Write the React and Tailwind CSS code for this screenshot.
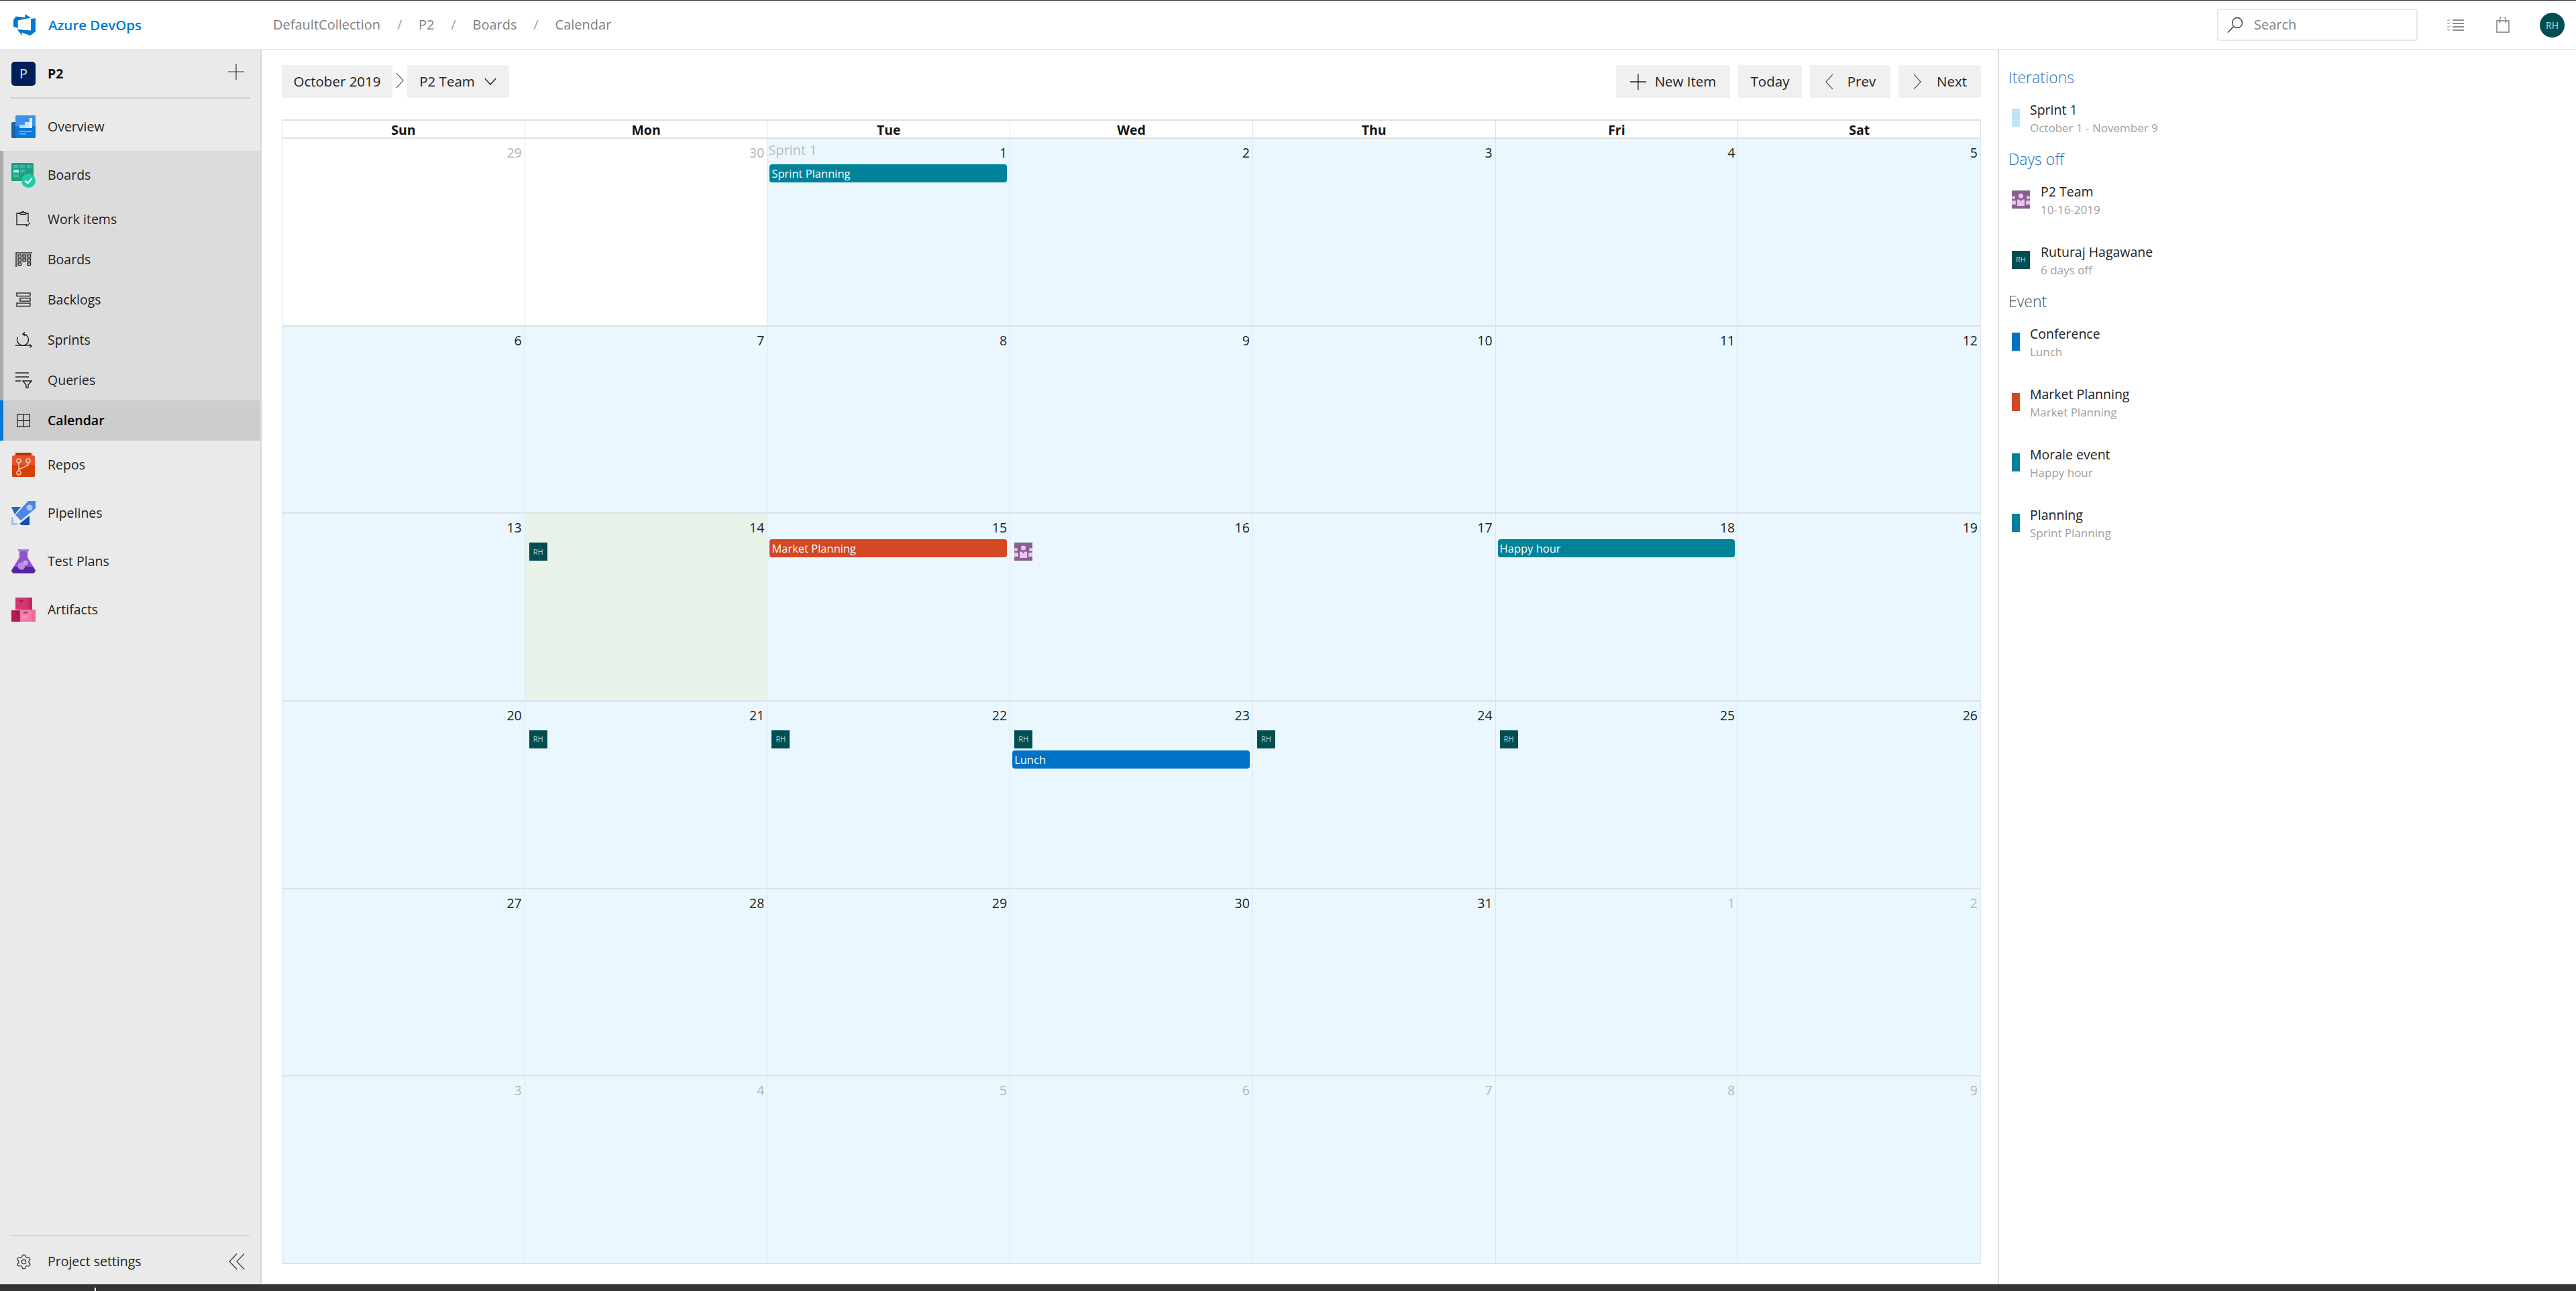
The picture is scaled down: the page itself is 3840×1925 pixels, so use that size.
import { Settings } from "lucide-react";

const WEEKS = [
  [29, 30, 1, 2, 3, 4, 5],
  [6, 7, 8, 9, 10, 11, 12],
  [13, 14, 15, 16, 17, 18, 19],
  [20, 21, 22, 23, 24, 25, 26],
  [27, 28, 29, 30, 31, 1, 2],
  [3, 4, 5, 6, 7, 8, 9],
];

const DAY_NAMES = ["Sun", "Mon", "Tue", "Wed", "Thu", "Fri", "Sat"];

// items per "week-day" cell
const CELL_ITEMS = {
  "0-2": [{ type: "bar", label: "Sprint Planning", color: "bg-[#008299]" }],
  "2-1": [{ type: "rh" }],
  "2-2": [{ type: "bar", label: "Market Planning", color: "bg-[#d34723]" }],
  "2-3": [{ type: "team" }],
  "2-5": [{ type: "bar", label: "Happy hour", color: "bg-[#008299]" }],
  "3-1": [{ type: "rh" }],
  "3-2": [{ type: "rh" }],
  "3-3": [{ type: "rh" }, { type: "bar", label: "Lunch", color: "bg-[#0072c6]", top: true }],
  "3-4": [{ type: "rh" }],
  "3-5": [{ type: "rh" }],
};

const TeamTile = ({ className }) => (
  <svg viewBox="0 0 27 27" className={className}>
    <rect width="27" height="27" fill="#86608e" />
    <g fill="#e8c4ee">
      <circle cx="13.5" cy="8" r="3.6" />
      <path d="M8 13.5h3.4l2.1 3 2.1-3H19V23H8z" />
      <circle cx="2.5" cy="10.5" r="2.5" />
      <path d="M0 15h4.5l1.5 1V21H0z" />
      <circle cx="24.5" cy="10.5" r="2.5" />
      <path d="M27 15h-4.5l-1.5 1V21h6z" />
    </g>
  </svg>
);

const RhTile = () => (
  <div className="w-[27px] h-[27px] bg-[#004e52] text-[#b9d6d6] text-[11px] flex items-center justify-center">
    RH
  </div>
);

const AzureLogo = () => (
  <svg viewBox="0 0 34 32" className="w-[34px] h-[32px]">
    <path fill="#0078d4" d="M34 6.200V26l-8 6-12.400-4.500V32l-7-9.200 20.400 1.600V7z" />
    <path fill="#0078d4" d="M1 8.500L4.700 3.600 18.400 5 18.300 0 27 5.600 7.700 9.400V21L1 18.800z" />
  </svg>
);

const OverviewIcon = () => (
  <svg viewBox="0 0 36 34" className="w-[36px] h-[34px]">
    <path fill="#1b5fae" d="M0 12a2 2 0 0 1 2-2h10v24H2a2 2 0 0 1-2-2z" />
    <path fill="#0f78d6" d="M6 2a2 2 0 0 1 2-2h26a2 2 0 0 1 2 2v30a2 2 0 0 1-2 2H6z" />
    <path fill="#3f93e6" d="M6 2a2 2 0 0 1 2-2h26a2 2 0 0 1 2 2v14H6z" />
    <rect x="12" y="14" width="8" height="5" fill="#b5d8f7" />
    <rect x="20" y="10" width="7" height="9" fill="#cde4fa" />
    <rect x="27" y="4" width="4" height="15" fill="#e2f0fc" />
    <rect x="12" y="23" width="19" height="1.500" fill="#90c4f0" />
    <rect x="12" y="27" width="10" height="1.500" fill="#90c4f0" />
  </svg>
);

const BoardsIcon = () => (
  <svg viewBox="0 0 36 37" className="w-[36px] h-[37px]">
    <rect width="33" height="27" rx="1.500" fill="#1d9e85" />
    <g fill="#3bbba1">
      <rect x="3" y="3" width="8" height="4.500" />
      <rect x="13" y="3" width="7" height="4.500" />
      <rect x="23" y="3" width="7" height="4.500" />
      <rect x="13" y="10" width="7" height="4.500" />
      <rect x="3" y="17" width="8" height="4.500" />
    </g>
    <rect x="3" y="10" width="8" height="4.500" fill="#9df3df" />
    <circle cx="25.500" cy="26.500" r="10.500" fill="#1fcaa5" />
    <path d="M20.500 26.500l3.700 3.700 6.300-7" fill="none" stroke="#fff" strokeWidth="2.400" />
  </svg>
);

const ReposIcon = () => (
  <svg viewBox="0 0 34 36" className="w-[34px] h-[36px]">
    <path fill="#b83200" d="M5 1a1 1 0 0 1 1-1h22a1 1 0 0 1 1 1v4H5z" />
    <path fill="#e8542a" d="M2 4h30l2 2v14H0V6z" />
    <path fill="#d93f00" d="M0 18h34v17a1 1 0 0 1-1 1H1a1 1 0 0 1-1-1z" />
    <g fill="none" stroke="#ffc9b5" strokeWidth="1.600">
      <circle cx="10" cy="12" r="3" />
      <circle cx="24" cy="12" r="3" />
      <circle cx="10" cy="30" r="3" />
      <path d="M10 15v12M24 15v3.500L10 25" />
    </g>
  </svg>
);

const PipelinesIcon = () => (
  <svg viewBox="0 0 36 36" className="w-[36px] h-[36px]">
    <path fill="#2a62c9" d="M0 9h14l-9 11z" />
    <path fill="#0f4ebb" d="M27 22v14H15l-3-2z" />
    <path fill="#4a86e8" d="M25 0h11v11L14 29l-8-8z" />
    <circle cx="27" cy="10" r="4.500" fill="#a9c8f7" />
    <path fill="#a3c1f5" d="M0 24h3v9h6v3H0z" />
    <path fill="#e6eefc" d="M4 27l4-4 2 2-4 4z" />
  </svg>
);

const TestPlansIcon = () => (
  <svg viewBox="0 0 36 36" className="w-[36px] h-[36px]">
    <rect x="10" y="0" width="16" height="3" fill="#a87fd8" />
    <path fill="#8d55c9" d="M12 3h12v9l11 18a4 4 0 0 1-3 6H4a4 4 0 0 1-3-6l11-18z" />
    <path fill="#5c22a5" d="M4 26h28l3 4a4 4 0 0 1-3 6H4a4 4 0 0 1-3-6z" />
    <circle cx="15" cy="25" r="5.500" fill="#b58ee0" />
    <circle cx="21" cy="20" r="3.500" fill="#c4a6e8" />
  </svg>
);

const ArtifactsIcon = () => (
  <svg viewBox="0 0 36 36" className="w-[36px] h-[36px]">
    <path fill="#cf356f" d="M6 1a1 1 0 0 1 1-1h24v18H6z" />
    <path fill="#bf2a5f" d="M25 0h5a1 1 0 0 1 1 1v17h-6z" />
    <rect x="12" y="4" width="6" height="2.500" fill="#a91f50" />
    <path fill="#b81a58" d="M0 19h13v17H1a1 1 0 0 1-1-1z" />
    <rect x="13" y="18" width="23" height="18" fill="#ea6a9a" />
    <rect x="13" y="18" width="17" height="18" fill="#f27aa6" />
    <rect x="18" y="21" width="6" height="2.500" fill="#c42d68" />
    <rect x="6" y="21" width="5" height="2.500" fill="#8e1040" />
    <rect x="16" y="27" width="9" height="1.200" fill="#fbc3d7" />
    <rect x="16" y="30" width="6" height="1.200" fill="#fbc3d7" />
  </svg>
);

const stroke = { fill: "none", stroke: "#222", strokeWidth: 1.4 };

const WorkItemsIcon = () => (
  <svg viewBox="0 0 22 24" className="w-[22px] h-[24px]" {...stroke}>
    <path d="M16 20H1V3h5M15 3h3v13" />
    <path d="M6 3.500V2h3V0.700h2V2h3.500v2.500H6z" />
    <path d="M14 20l2 2 5-5" />
  </svg>
);

const SubBoardsIcon = () => (
  <svg viewBox="0 0 25 22" className="w-[25px] h-[22px]" {...stroke}>
    <path d="M1 22V1h24" />
    <rect x="4" y="4" width="4.500" height="3.500" />
    <rect x="11" y="4" width="4.500" height="3.500" />
    <rect x="18" y="4" width="4.500" height="3.500" />
    <rect x="4" y="10" width="4.500" height="3.500" />
    <rect x="11" y="10" width="4.500" height="3.500" />
    <rect x="18" y="10" width="4.500" height="3.500" />
    <rect x="4" y="16" width="4.500" height="3.500" />
    <rect x="18" y="16" width="4.500" height="3.500" />
  </svg>
);

const BacklogsIcon = () => (
  <svg viewBox="0 0 22 22" className="w-[22px] h-[22px]" {...stroke}>
    <rect x="1" y="1" width="20" height="4.500" />
    <rect x="6" y="8.500" width="15" height="4.500" />
    <rect x="1" y="16" width="20" height="4.500" />
  </svg>
);

const SprintsIcon = () => (
  <svg viewBox="0 0 25 24" className="w-[25px] h-[24px]" {...stroke}>
    <path d="M11 3A8.500 8.500 0 1 1 3.500 7.500" />
    <path d="M14 0.500L11 3l3 3" />
    <path d="M0 20h20l4 1M21.500 18.500l2.500 2.500-2.500 2.500" />
  </svg>
);

const QueriesIcon = () => (
  <svg viewBox="0 0 25 24" className="w-[25px] h-[24px]" {...stroke}>
    <path d="M0 1h20M0 7h20M0 13h8" />
    <path d="M11 13h13l-5 6v4.500h-3V19z" />
  </svg>
);

const CalendarIcon = () => (
  <svg viewBox="0 0 20 20" className="w-[20px] h-[20px]" fill="none" stroke="#222" strokeWidth="1.300">
    <rect x="0.700" y="0.700" width="18.600" height="18.600" />
    <path d="M10 0.700v18.600M0.700 10h18.600" />
  </svg>
);

const Chevron = ({ className, d }) => (
  <svg viewBox="0 0 14 24" className={className} fill="none" stroke="#333" strokeWidth="1.100">
    <path d={d} />
  </svg>
);

const NavRow = ({ icon, label }) => (
  <div className="h-[72px] flex items-center pl-[17px] gap-[18px] text-[#222]">
    <div className="w-[36px] flex justify-center">{icon}</div>
    <span>{label}</span>
  </div>
);

const SubRow = ({ icon, label, active, heavy, tall }) => (
  <div
    className={`flex items-center pl-[12px] gap-[18px] border-l-[5px] text-[#222] ${tall ? "h-[72px]" : "h-[60px]"} ${
      active ? "bg-[#cdcdcd] border-[#0078d4] font-semibold text-black" : "border-[#ababab]"
    } ${heavy ? "font-medium" : ""}`}
  >
    <div className="w-[36px] flex justify-center">{icon}</div>
    <span>{label}</span>
  </div>
);

const Sidebar = () => (
  <aside className="w-[390px] shrink-0 bg-[#eaeaea] border-r-2 border-[#d6d6d6] flex flex-col">
    <div className="h-[70px] flex items-center pl-[17px] pr-[24px]">
      <div className="w-[36px] h-[36px] rounded-[5px] bg-[#001f5b] text-[#dfe6f2] text-[20px] flex items-center justify-center">
        P
      </div>
      <span className="ml-[18px] font-bold text-[#111]">P2</span>
      <svg viewBox="0 0 24 24" className="w-[24px] h-[24px] ml-auto -mt-[6px]" stroke="#333" strokeWidth="1.200">
        <path d="M12 0v24M0 12h24" />
      </svg>
    </div>
    <div className="h-[2px] mx-[15px] bg-[#d2d2d2]" />
    <div className="mt-[6px]">
      <NavRow icon={<OverviewIcon />} label="Overview" />
    </div>
    <div className="bg-[#dcdcdc]">
      <SubRow tall heavy icon={<BoardsIcon />} label="Boards" />
      <SubRow icon={<WorkItemsIcon />} label="Work items" />
      <SubRow icon={<SubBoardsIcon />} label="Boards" />
      <SubRow icon={<BacklogsIcon />} label="Backlogs" />
      <SubRow icon={<SprintsIcon />} label="Sprints" />
      <SubRow icon={<QueriesIcon />} label="Queries" />
      <SubRow active icon={<CalendarIcon />} label="Calendar" />
    </div>
    <NavRow icon={<ReposIcon />} label="Repos" />
    <NavRow icon={<PipelinesIcon />} label="Pipelines" />
    <NavRow icon={<TestPlansIcon />} label="Test Plans" />
    <NavRow icon={<ArtifactsIcon />} label="Artifacts" />
    <div className="mt-auto mx-[15px] border-t border-[#cfcfcf] h-[73px] flex items-center pt-[4px] pl-[8px] pr-[8px] text-[#222]">
      <Settings size={25} strokeWidth={1.1} className="text-[#222]" />
      <span className="ml-[23px]">Project settings</span>
      <svg viewBox="0 0 24 24" className="w-[24px] h-[24px] ml-auto" fill="none" stroke="#333" strokeWidth="1.100">
        <path d="M12 0.500L1 12l11 11.500M23 0.500L12 12l11 11.500" />
      </svg>
    </div>
  </aside>
);

const TopBar = () => (
  <header className="h-[74px] shrink-0 flex items-center border-b-2 border-[#e8e8e8] bg-white">
    <div className="w-[407px] shrink-0 pl-[19px] flex items-center">
      <AzureLogo />
      <span className="ml-[19px] text-[#0078d4] font-semibold text-[20.5px]">Azure DevOps</span>
    </div>
    <nav className="flex items-center text-[#808080] text-[20px]">
      <span>DefaultCollection</span>
      <span className="w-[57px] text-center text-[#a0a0a0]">/</span>
      <span>P2</span>
      <span className="w-[57px] text-center text-[#a0a0a0]">/</span>
      <span>Boards</span>
      <span className="w-[57px] text-center text-[#a0a0a0]">/</span>
      <span>Calendar</span>
    </nav>
    <div className="ml-auto w-[299px] h-[48px] border-2 border-[#e8e8e8] rounded-[3px] flex items-center pl-[13px] gap-[16px] text-[#808080] text-[20px]">
      <svg viewBox="0 0 24 24" className="w-[24px] h-[24px]" fill="none" stroke="#333" strokeWidth="1.300">
        <circle cx="15" cy="9" r="7.500" />
        <path d="M9.500 14.500L1 23.500" />
      </svg>
      <span>Search</span>
    </div>
    <svg viewBox="0 0 25 18" className="ml-[44px] w-[25px] h-[18px]" fill="none" stroke="#666" strokeWidth="1.500">
      <path d="M8 2h17M8 7h17M8 12h17M8 17h17" />
      <path strokeWidth="1" d="M0 1.500l1.500 1.500L4 0.500M0 6.500L1.500 8 4 5.500M0 11.500L1.500 13 4 10.500M0 16l1.500 1.500L4 15" />
    </svg>
    <svg viewBox="0 0 20 24" className="ml-[48px] w-[20px] h-[24px]" fill="none" stroke="#777" strokeWidth="1.400">
      <path d="M1 6h18v17H1z" />
      <path d="M5.500 9V4a4 4 0 0 1 9 0v5" />
    </svg>
    <div className="ml-[45px] mr-[17px] w-[37px] h-[37px] rounded-full bg-[#004e52] text-[#c9dede] text-[14px] flex items-center justify-center">
      RH
    </div>
  </header>
);

const ToolButton = ({ className, children }) => (
  <div
    className={`h-[49px] rounded-[3px] bg-[#f0f0f0] text-[#222] text-[20.5px] font-medium flex items-center justify-center ${className}`}
  >
    {children}
  </div>
);

const Toolbar = () => (
  <div className="flex items-center">
    <ToolButton className="w-[165px]">October 2019</ToolButton>
    <Chevron className="w-[14px] h-[24px] mx-[4px] -mt-[4px]" d="M2 1l10 11L2 23" />
    <ToolButton className="w-[152px] gap-[13px]">
      <span>P2 Team</span>
      <svg viewBox="0 0 20 12" className="w-[20px] h-[11px]" fill="none" stroke="#222" strokeWidth="1.500">
        <path d="M1 1l9 10 9-10" />
      </svg>
    </ToolButton>
    <ToolButton className="ml-auto w-[170px] gap-[13px]">
      <svg viewBox="0 0 24 24" className="w-[24px] h-[24px]" stroke="#222" strokeWidth="1.300">
        <path d="M12 0v24M0 12h24" />
      </svg>
      <span>New Item</span>
    </ToolButton>
    <ToolButton className="ml-[12px] w-[95px]">Today</ToolButton>
    <ToolButton className="ml-[12px] w-[120px] gap-[20px]">
      <Chevron className="w-[14px] h-[24px]" d="M12 1L2 12l10 11" />
      <span>Prev</span>
    </ToolButton>
    <ToolButton className="ml-[12px] w-[123px] gap-[22px]">
      <Chevron className="w-[14px] h-[24px]" d="M2 1l10 11L2 23" />
      <span>Next</span>
    </ToolButton>
  </div>
);

const DayCell = ({ week, col, day }) => {
  const muted = (week === 0 && col < 2) || (week === 4 && col > 4) || week === 5;
  const white = week === 0 && col < 2;
  const today = week === 2 && col === 1;
  const items = CELL_ITEMS[`${week}-${col}`] || [];
  return (
    <div
      className={`min-w-0 flex flex-col border-r border-b-2 border-r-[#dbe5ec] border-b-[#dde1e6] ${
        white ? "bg-white border-r-[#e0e0e0]" : today ? "bg-[#eaf3ea]" : "bg-[#eaf7fe]"
      }`}
    >
      <div className={`h-[38px] flex pt-[6px] pr-[4px] ${muted ? "text-[#b5b5b5]" : "text-[#222]"}`}>
        {week === 0 && col === 2 && <span className="pl-[1px] -mt-[4px] text-[20px] text-[#bcbcbc]">Sprint 1</span>}
        <span className="ml-auto">{day}</span>
      </div>
      {items.map((item, i) => {
        if (item.type === "bar") {
          return (
            <div
              key={i}
              className={`h-[27px] ml-[3px] mr-[4px] rounded-[4px] pl-[3px] text-white text-[16.5px] leading-[27px] ${item.color} ${
                item.top ? "mt-[3px]" : ""
              }`}
            >
              {item.label}
            </div>
          );
        }
        return (
          <div key={i} className="mt-[5px] ml-[6px]">
            {item.type === "rh" ? <RhTile /> : <TeamTile className="w-[27px] h-[27px]" />}
          </div>
        );
      })}
    </div>
  );
};

const Calendar = () => (
  <div className="mt-[32px] border-l border-[#dfdfdf]">
    <div className="grid grid-cols-7 h-[29px] border-t-2 border-b-2 border-[#dfdfdf] bg-white">
      {DAY_NAMES.map((name) => (
        <div key={name} className="border-r border-[#e0e0e0] text-center font-bold text-[#111] leading-[27px]">
          {name}
        </div>
      ))}
    </div>
    <div className="grid grid-cols-7 grid-rows-6 h-[1678px]">
      {WEEKS.map((days, week) =>
        days.map((day, col) => <DayCell key={`${week}-${col}`} week={week} col={col} day={day} />)
      )}
    </div>
  </div>
);

const LegendItem = ({ swatch, indent, title, sub }) => (
  <div className="flex h-[54px]">
    <div className="mt-[12px] shrink-0">{swatch}</div>
    <div className={indent ? "ml-[16px]" : "ml-[15px]"}>
      <div className="h-[27px] leading-[27px] text-[#222]">{title}</div>
      <div className="h-[27px] leading-[27px] text-[17px] text-[#a0a0a0]">{sub}</div>
    </div>
  </div>
);

const Swatch = ({ color }) => <div className={`w-[12px] h-[27px] ${color}`} />;

const LegendSection = ({ title, titleColor, children }) => (
  <section className="mb-[15px]">
    <h2 className={`h-[36px] leading-[36px] text-[23px] font-light ${titleColor}`}>{title}</h2>
    <div className="mt-[17px] ml-[5px] flex flex-col gap-[36px]">{children}</div>
  </section>
);

const Legend = () => (
  <aside className="w-[862px] shrink-0 border-l-2 border-[#e0e0e0] pt-[22px] pl-[14px]">
    <LegendSection title="Iterations" titleColor="text-[#2a70b8]">
      <LegendItem swatch={<Swatch color="bg-[#c0e3fb]" />} title="Sprint 1" sub="October 1 - November 9" />
    </LegendSection>
    <LegendSection title="Days off" titleColor="text-[#1070bd]">
      <LegendItem indent swatch={<TeamTile className="w-[27px] h-[27px]" />} title="P2 Team" sub="10-16-2019" />
      <LegendItem indent swatch={<RhTile />} title="Ruturaj Hagawane" sub="6 days off" />
    </LegendSection>
    <LegendSection title="Event" titleColor="text-[#3a4a5a]">
      <LegendItem swatch={<Swatch color="bg-[#0072c6]" />} title="Conference" sub="Lunch" />
      <LegendItem swatch={<Swatch color="bg-[#d34723]" />} title="Market Planning" sub="Market Planning" />
      <LegendItem swatch={<Swatch color="bg-[#008299]" />} title="Morale event" sub="Happy hour" />
      <LegendItem swatch={<Swatch color="bg-[#008299]" />} title="Planning" sub="Sprint Planning" />
    </LegendSection>
  </aside>
);

export default function App() {
  return (
    <div className="w-[3840px] h-[1925px] flex flex-col bg-white font-['Open_Sans',sans-serif] text-[19.5px] overflow-hidden">
      <div className="h-px shrink-0 bg-[#333]" />
      <TopBar />
      <div className="flex-1 min-h-0 flex">
        <Sidebar />
        <main className="flex-1 min-w-0 pt-[22px] pl-[30px] pr-[25px]">
          <Toolbar />
          <Calendar />
        </main>
        <Legend />
      </div>
      <div className="h-[10px] shrink-0 bg-[#333] flex items-end pl-[141px]">
        <div className="w-[2px] h-[5px] bg-white" />
      </div>
    </div>
  );
}
